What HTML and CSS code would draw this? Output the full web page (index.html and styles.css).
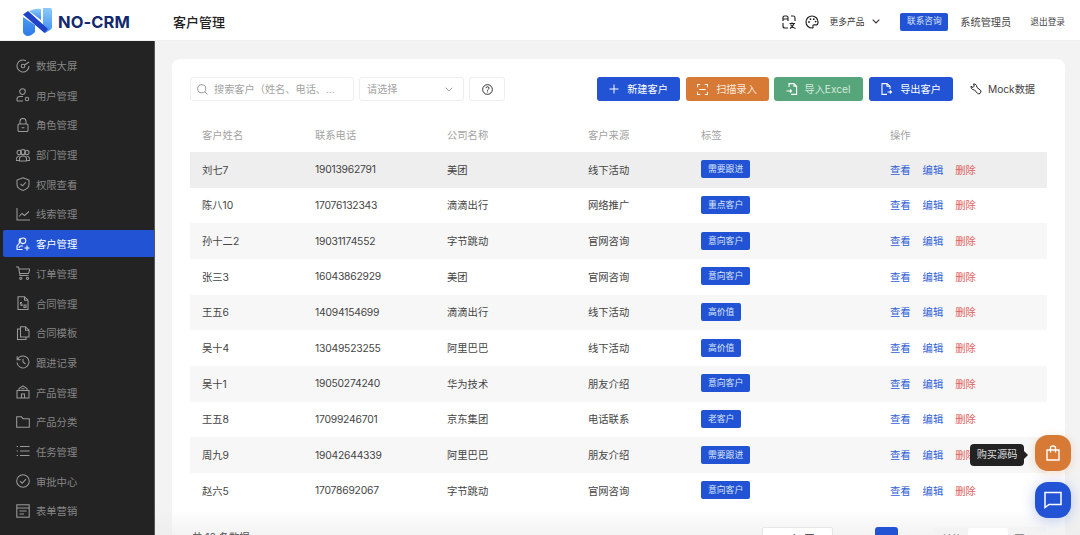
FILE: index.html
```html
<!DOCTYPE html>
<html lang="zh">
<head>
<meta charset="utf-8">
<title>NO-CRM 客户管理</title>
<link rel="stylesheet" href="styles.css">
</head>
<body>
<div class="shell">
  <header class="topbar">
    <div class="brand">
      <svg class="logo" viewBox="0 0 29 28" width="29" height="28">
        <defs>
          <linearGradient id="lg1" x1="0" y1="0" x2="0" y2="1"><stop offset="0" stop-color="#8ccbfa"/><stop offset="1" stop-color="#3d8cf0"/></linearGradient>
          <linearGradient id="lg2" x1="0" y1="0" x2="0" y2="1"><stop offset="0" stop-color="#4a9bf3"/><stop offset="1" stop-color="#2f7ae8"/></linearGradient>
        </defs>
        <path d="M6 3 L12 1 Q14 .5 18 1 V12 Z" fill="url(#lg1)"/>
        <path d="M20 0 H27 Q29 0 29 2 V19 Q29 21 27 22 L22 25 L20 20 Z" fill="url(#lg1)"/>
        <path d="M0 9 L12 17 V24 Q8 28 5 28 Q3 28 2 27 L1 26 Q0 25 0 24 Z" fill="url(#lg2)"/>
        <path d="M0 6.5 L5 3 L25 21 L21.5 25 Z" fill="#1f43c8"/>
      </svg>
      <span class="brand-name">NO-CRM</span>
    </div>
    <h1 class="page-title">客户管理</h1>
    <div class="top-actions">
      <svg class="top-icon" viewBox="0 0 14 14" width="14" height="14" fill="none" stroke="#222" stroke-width="1.15"><path d="M1 6V2.5Q1 1 2.5 1H4.5Q6 1 6 2.5V6M1 4H6M9 1H11.5Q13 1 13 3V6M1 8V11Q1 13 3 13H6"/><path d="M7.5 8.5H13M10 7.5V8.5M12 8.5Q11 11.5 8 13.5M8.5 9.5Q10 12.5 13.5 13.5"/></svg>
      <svg class="top-icon palette" viewBox="0 0 14 14" width="14" height="14" fill="none" stroke="#222" stroke-width="1.2"><path d="M7 1A6 6 0 1 0 7 13Q8.5 13 8 11.5Q7.6 9.8 9.3 9.8H11.5Q13 9.8 13 7A6 6 0 0 0 7 1Z"/><circle cx="4" cy="7" r=".9" fill="#222" stroke="none"/><circle cx="5.5" cy="4.2" r=".9" fill="#222" stroke="none"/><circle cx="8.8" cy="4.2" r=".9" fill="#222" stroke="none"/><circle cx="10.6" cy="6.6" r=".9" fill="#222" stroke="none"/></svg>
      <span class="more">更多产品</span>
      <svg class="chev" viewBox="0 0 8 5" width="8" height="5" fill="none" stroke="#333" stroke-width="1.1"><path d="M.7 .7 4 4 7.3 .7"/></svg>
      <span class="contact">联系咨询</span>
      <span class="admin">系统管理员</span>
      <span class="logout">退出登录</span>
    </div>
  </header>
  <div class="body">
    <aside class="sidebar">
      <a class="nav"><svg viewBox="0 0 14 14" width="14" height="14"><path d="M10 1.8A6 6 0 1 0 13 7M13 3 8.5 6"/><circle cx="7" cy="7" r="1.8"/></svg>数据大屏</a>
      <a class="nav"><svg viewBox="0 0 14 14" width="14" height="14"><circle cx="6.5" cy="3.6" r="2.8"/><path d="M1 13V11Q1 8.5 4 8.5H7M1 13H7"/><circle cx="11" cy="11" r="1.7"/></svg>用户管理</a>
      <a class="nav"><svg viewBox="0 0 14 14" width="14" height="14"><rect x="2" y="6" width="10" height="7.5" rx="1"/><path d="M4 6V3.5A3 3 0 0 1 10 3.5V6M5.5 9.8H8.5"/></svg>角色管理</a>
      <a class="nav"><svg viewBox="0 0 14 14" width="14" height="14"><circle cx="7" cy="4" r="2.6"/><circle cx="3.2" cy="4.5" r="2.2"/><circle cx="10.8" cy="4.5" r="2.2"/><path d="M0 12.5Q.5 8 3.5 8M14 12.5Q13.5 8 10.5 8M3.5 13V11Q3.5 8 7 8T10.5 11V13ZM0 12.5H3.5M10.5 12.5H14"/></svg>部门管理</a>
      <a class="nav"><svg viewBox="0 0 14 14" width="14" height="14"><path d="M7 .8 13 3V7.5Q13 11.5 7 13.5 1 11.5 1 7.5V3ZM4.5 6.8 6.5 8.8 9.8 5.3"/></svg>权限查看</a>
      <a class="nav"><svg viewBox="0 0 14 14" width="14" height="14"><path d="M1 1V13H14M3 9.5 6 6.5 8.5 8.5 13 4.5"/></svg>线索管理</a>
      <a class="nav active"><svg viewBox="0 0 14 14" width="14" height="14"><circle cx="7" cy="3.8" r="2.8"/><path d="M4.5 1.2Q2.5 3 3.5 6L1 9V12.5H6.5M7 9H4.5Q3 9 3 11M11 8.5V13.5M8.5 11H13.5"/></svg>客户管理</a>
      <a class="nav"><svg viewBox="0 0 14 14" width="14" height="14"><path d="M0 1H2.5L4 9.5H12.5M3 3H14L12.5 7.5H3.5"/><circle cx="4.8" cy="12.3" r="1.1"/><circle cx="11.5" cy="12.3" r="1.1"/></svg>订单管理</a>
      <a class="nav"><svg viewBox="0 0 14 14" width="14" height="14"><path d="M2 .7H8.5L12 4.2V13.5H2ZM8.5 .7V4.2H12M6 6.5H4.5V8H6V9.5H4.5M8 9H10V11.5H8Z"/></svg>合同管理</a>
      <a class="nav"><svg viewBox="0 0 14 14" width="14" height="14"><path d="M4.5 .7H9.5L13 4.2V11H4.5ZM9.5 .7V4.2H13M4.5 3H1.5V13.5H10V11"/></svg>合同模板</a>
      <a class="nav"><svg viewBox="0 0 14 14" width="14" height="14"><path d="M1.5 4.5A6 6 0 1 1 1 7.5M1.2 1.2V4.7H4.7M7 3.7V7L9.5 9"/></svg>跟进记录</a>
      <a class="nav"><svg viewBox="0 0 14 14" width="14" height="14"><path d="M1 5.5H13V13H1ZM3 5.5V3.5L7 .8 11 3.5V5.5M5.5 13V9H8.5V13M5.5 3.8H8.5"/></svg>产品管理</a>
      <a class="nav"><svg viewBox="0 0 14 14" width="14" height="14"><path d="M.7 1.8H5.5L7 3.7H13.3V12.3H.7Z"/></svg>产品分类</a>
      <a class="nav"><svg viewBox="0 0 14 14" width="14" height="14"><path d="M4 2.5H13.5M4 7H13.5M4 11.5H13.5M.7 2.5H2M.7 7H2M.7 11.5H2"/></svg>任务管理</a>
      <a class="nav"><svg viewBox="0 0 14 14" width="14" height="14"><circle cx="7" cy="7" r="6.3"/><path d="M4 7.2 6.2 9.2 10 5.2"/></svg>审批中心</a>
      <a class="nav"><svg viewBox="0 0 14 14" width="14" height="14"><rect x=".8" y=".8" width="12.4" height="12.4"/><path d="M.8 4H13.2M3.5 7H10.5M3.5 10H8"/></svg>表单营销</a>
    </aside>
    <main class="content">
      <section class="card">
        <div class="toolbar">
          <div class="filters">
            <div class="field search">
              <svg viewBox="0 0 12 12" width="11" height="11" fill="none" stroke="#8c8c8c" stroke-width="1"><circle cx="5.2" cy="5.2" r="4.4"/><path d="M8.5 8.5 11.5 11.5"/></svg>
              <span class="placeholder">搜索客户（姓名、电话、…</span>
            </div>
            <div class="field select">
              <span class="placeholder">请选择</span>
              <svg viewBox="0 0 8 5" width="8" height="5" fill="none" stroke="#aaa" stroke-width="1"><path d="M.7 .7 4 4 7.3 .7"/></svg>
            </div>
            <div class="field help">
              <svg viewBox="0 0 12 12" width="11" height="11" fill="none" stroke="#222" stroke-width="1"><circle cx="6" cy="6" r="5.3"/><path d="M4.3 4.6Q4.4 3 6 3T7.7 4.5Q7.7 5.4 6.8 5.8 6 6.2 6 7.2M6 8.2V9.2"/></svg>
            </div>
          </div>
          <div class="buttons">
            <button class="btn blue btn-new"><svg viewBox="0 0 10 10" width="10" height="10" fill="none" stroke="#fff" stroke-width="1"><path d="M5 .5V9.5M.5 5H9.5"/></svg>新建客户</button>
            <button class="btn orange btn-new"><svg viewBox="0 0 12 12" width="11" height="11" fill="none" stroke="#fff" stroke-width="1.1"><path d="M.6 3.5V.6H3.5M8.5 .6H11.4V3.5M11.4 8.5V11.4H8.5M3.5 11.4H.6V8.5M2.5 6H9.5"/></svg>扫描录入</button>
            <button class="btn green btn-excel"><svg viewBox="0 0 12 12" width="12" height="12" fill="none" stroke="#fff" stroke-width="1.1"><path d="M3 4V.6H8L10.6 3.2V11.4H5M8 .6V3.2H10.6M.5 8H5.5M4 6.5 5.5 8 4 9.5"/></svg>导入Excel</button>
            <button class="btn blue btn-export"><svg viewBox="0 0 12 12" width="12" height="12" fill="none" stroke="#fff" stroke-width="1.1"><path d="M7 11.4H2V.6H7L10 3.2V6M7 .6V3.2H10M7.5 9H11.5M10 7.5 11.5 9 10 10.5"/></svg>导出客户</button>
            <button class="btn ghost"><svg viewBox="0 0 12 12" width="12" height="12" fill="none" stroke="#222" stroke-width="1"><path d="M3.5 1Q5.5 .5 6.5 2.5L7 4.5 10.8 7.5Q11.5 9 10 10.5 8.8 11.3 7.5 10.3L4.5 7 2.5 6.5Q.8 5.5 1 3.3L3 4.5 4.3 3Z"/></svg>Mock数据</button>
          </div>
        </div>
        <div class="table">
          <div class="row head"><span>客户姓名</span><span>联系电话</span><span>公司名称</span><span>客户来源</span><span>标签</span><span>操作</span></div>
          <div class="row hover"><span>刘七7</span><span class="phone">19013962791</span><span>美团</span><span>线下活动</span><span><i class="tag">需要跟进</i></span><span class="ops"><a>查看</a><a>编辑</a><a class="del">删除</a></span></div>
          <div class="row"><span>陈八10</span><span class="phone">17076132343</span><span>滴滴出行</span><span>网络推广</span><span><i class="tag">重点客户</i></span><span class="ops"><a>查看</a><a>编辑</a><a class="del">删除</a></span></div>
          <div class="row stripe"><span>孙十二2</span><span class="phone">19031174552</span><span>字节跳动</span><span>官网咨询</span><span><i class="tag">意向客户</i></span><span class="ops"><a>查看</a><a>编辑</a><a class="del">删除</a></span></div>
          <div class="row"><span>张三3</span><span class="phone">16043862929</span><span>美团</span><span>官网咨询</span><span><i class="tag">意向客户</i></span><span class="ops"><a>查看</a><a>编辑</a><a class="del">删除</a></span></div>
          <div class="row stripe"><span>王五6</span><span class="phone">14094154699</span><span>滴滴出行</span><span>线下活动</span><span><i class="tag">高价值</i></span><span class="ops"><a>查看</a><a>编辑</a><a class="del">删除</a></span></div>
          <div class="row"><span>吴十4</span><span class="phone">13049523255</span><span>阿里巴巴</span><span>线下活动</span><span><i class="tag">高价值</i></span><span class="ops"><a>查看</a><a>编辑</a><a class="del">删除</a></span></div>
          <div class="row stripe"><span>吴十1</span><span class="phone">19050274240</span><span>华为技术</span><span>朋友介绍</span><span><i class="tag">意向客户</i></span><span class="ops"><a>查看</a><a>编辑</a><a class="del">删除</a></span></div>
          <div class="row"><span>王五8</span><span class="phone">17099246701</span><span>京东集团</span><span>电话联系</span><span><i class="tag">老客户</i></span><span class="ops"><a>查看</a><a>编辑</a><a class="del">删除</a></span></div>
          <div class="row stripe"><span>周九9</span><span class="phone">19042644339</span><span>阿里巴巴</span><span>朋友介绍</span><span><i class="tag">需要跟进</i></span><span class="ops"><a>查看</a><a>编辑</a><a class="del">删除</a></span></div>
          <div class="row"><span>赵六5</span><span class="phone">17078692067</span><span>字节跳动</span><span>官网咨询</span><span><i class="tag">意向客户</i></span><span class="ops"><a>查看</a><a>编辑</a><a class="del">删除</a></span></div>
        </div>
        <div class="pager">
          <span class="total">共 10 条数据</span>
          <span class="size">10条/页</span>
          <span class="page">1</span>
          <span class="jump">前往<i class="jump-input">1</i>页</span>
        </div>
      </section>
    </main>
  </div>
</div>
<div class="fade"></div>
<div class="tooltip">购买源码</div>
<div class="fab fab-buy"><svg viewBox="0 0 16 16" width="16" height="16" fill="none" stroke="#fff" stroke-width="1.4"><path d="M2 5H14V15H2ZM5.5 7.5V3Q5.5 1 8 1T10.5 3V7.5"/></svg></div>
<div class="fab fab-chat"><svg viewBox="0 0 18 18" width="18" height="18" fill="none" stroke="#fff" stroke-width="1.5"><path d="M1 1.5H17V13.5H5L1 16.5Z"/></svg></div>
</body>
</html>
```
FILE: styles.css
```css
* { box-sizing: border-box; }
html, body { margin: 0; height: 535px; overflow: hidden; }
body { font-family: Inter, "Noto Sans CJK SC", sans-serif; font-size: 10.3px; color: #333; background: #f3f3f3; position: relative; }
.shell { display: flex; flex-direction: column; width: 1080px; height: 535px; }

.topbar { flex: none; height: 41px; background: #fff; display: flex; align-items: center; padding: 3px 15px 0 23px; border-bottom: 1px solid #f0f0f0; }
.brand { display: flex; align-items: center; width: 150px; gap: 6px; }
.logo { flex: none; }
.brand-name { font-size: 16.5px; font-weight: 700; color: #12296e; letter-spacing: .1px; }
.page-title { margin: 0; font-size: 13px; font-weight: 500; color: #222; }
.top-actions { margin-left: auto; display: flex; align-items: center; }
.palette { margin-left: 9px; }
.more { margin-left: 11px; font-size: 8.7px; color: #333; }
.chev { margin-left: 8px; }
.contact { margin-left: 20px; width: 48px; height: 18px; line-height: 17px; text-align: center; background: #2153d4; color: #dfe7fb; font-size: 8.7px; border-radius: 2px; }
.admin { margin-left: 12px; color: #444; font-size: 10.2px; }
.logout { margin-left: 19px; color: #444; font-size: 8.7px; }

.body { flex: 1; display: flex; min-height: 0; }
.sidebar { flex: none; width: 155px; background: #232323; padding-top: 11px; display: flex; flex-direction: column; gap: 2.69px; overflow: hidden; border-right: 1px solid #555; }
.nav { flex: none; height: 27px; margin-left: 3px; padding-left: 13px; display: flex; align-items: center; gap: 6px; color: #868686; font-size: 10.3px; border-radius: 2px 0 0 2px; }
.nav svg { flex: none; fill: none; stroke: #9a9a9a; stroke-width: 1.05; }
.nav.active { background: #2153d4; color: #fff; }
.nav.active svg { stroke: #fff; }

.content { flex: 1; min-width: 0; padding: 18px 15px 0 17px; overflow: hidden; }
.card { background: #fff; border-radius: 8px; padding: 18px; height: 520px; }
.toolbar { display: flex; justify-content: space-between; height: 24px; }
.filters, .buttons { display: flex; }
.filters { gap: 5px; }
.buttons { gap: 5.5px; }
.field { height: 24px; border: 1px solid #eee; border-radius: 3px; display: flex; align-items: center; background: #fff; }
.search { width: 164px; padding-left: 6px; gap: 6px; }
.select { width: 105px; padding: 0 10px 0 7px; justify-content: space-between; }
.help { width: 36px; justify-content: center; }
.placeholder { color: #a3a3a3; font-size: 10.2px; white-space: nowrap; padding-bottom: 2px; }
.btn { height: 24px; border: 0; border-radius: 3px; padding: 0 0 2px; display: flex; align-items: center; justify-content: center; gap: 8px; font: inherit; font-size: 10.2px; color: #fff; }
.btn svg { margin-top: 2px; }
.btn-new { width: 83px; }
.btn-excel { width: 89px; gap: 6px; color: #d5eadf; }
.btn-export { width: 84px; }
.blue { background: #2153d4; }
.orange { background: #d67a36; color: #fbe9dc; }
.green { background: #57a57a; }
.ghost { width: 89px; background: #fff; color: #444; gap: 6px; }

.table { margin-top: 17px; }
.row { display: grid; grid-template-columns: 125px 132px 141px 113px 189px 1fr; height: 35.67px; padding-bottom: 1px; align-items: center; color: #444; }
.row > span:first-child { padding-left: 12px; }
.head { height: 34px; color: #a3a3a3; }
.phone { letter-spacing: -.2px; }
.hover { background: #eeeeee; }
.stripe { background: #f7f7f7; }
.tag { display: inline-block; height: 18px; line-height: 17px; padding: 0 7px; background: #2153d4; color: #dde5fa; font-style: normal; font-size: 8.8px; border-radius: 2px; vertical-align: middle; }
.ops { display: flex; gap: 12px; }
.ops a { color: #2f60d8; }
.ops .del { color: #e0635c; }

.pager { margin-top: 18px; display: flex; align-items: flex-start; height: 30px; position: relative; z-index: 1; }
.total { margin-left: 2px; padding-top: 2px; color: #555; }
.size { margin-left: 512px; width: 71px; height: 24px; border: 1px solid #e6e6e6; border-radius: 2px; text-align: center; line-height: 22px; background: #fff; }
.page { margin-left: 42px; width: 23px; height: 24px; line-height: 24px; text-align: center; background: #2153d4; color: #fff; border-radius: 3px; }
.jump { margin-left: 36px; width: 112px; height: 24px; background: #f3f3f3; color: #777; display: flex; align-items: center; padding: 0 8px; gap: 6px; border-radius: 2px; }
.jump-input { width: 40px; height: 22px; background: #fff; border-radius: 2px; font-style: normal; text-align: center; line-height: 22px; }

.fade { position: absolute; z-index: 0; left: 155px; right: 0; bottom: 0; height: 26px; background: linear-gradient(to bottom, rgba(235,235,235,0), rgba(235,235,235,.6)); pointer-events: none; }
.tooltip { position: absolute; z-index: 2; left: 970px; top: 444px; width: 54px; height: 22px; line-height: 21px; text-align: center; background: #222; color: #ddd; border-radius: 4px; font-size: 10.2px; }
.tooltip::after { content: ""; position: absolute; left: 100%; top: 7px; border: 4px solid transparent; border-left-color: #222; }
.fab { position: absolute; z-index: 2; left: 1035px; width: 36px; height: 36px; border-radius: 13px; display: flex; align-items: center; justify-content: center; }
.fab-buy { top: 435px; background: #d67a36; box-shadow: 0 2px 10px rgba(214,122,54,.25); }
.fab-chat { top: 482px; background: #2153d4; box-shadow: 0 2px 14px rgba(33,83,212,.3); }
```
